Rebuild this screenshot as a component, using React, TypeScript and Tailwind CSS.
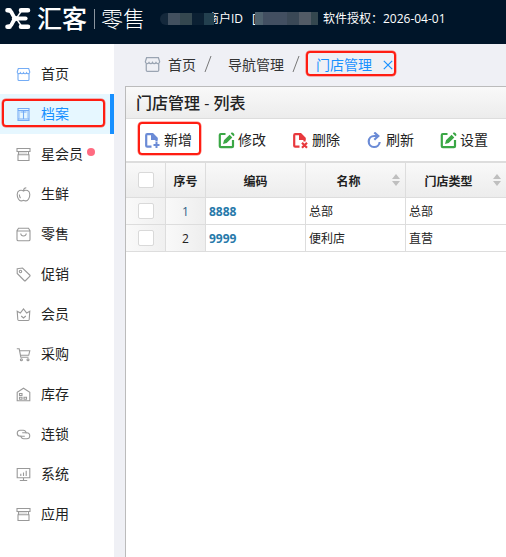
import type { ReactNode } from 'react';

interface MenuItem {
  label: string;
  icon: ReactNode;
  active?: boolean;
  blue?: boolean;
  dot?: boolean;
}

interface Action {
  label: string;
  icon: ReactNode;
  marked?: boolean;
}

interface Store {
  code: string;
  name: string;
  type: string;
}

const shopIcon = (
  <>
    <path d="M2.300 1.500h10.400l1.100 3.500a1.700 1.700 0 0 1-3.200.8 1.700 1.700 0 0 1-3.100 0 1.700 1.700 0 0 1-3.100 0A1.700 1.700 0 0 1 1.200 5z" />
    <path d="M2 7v5.500q0 1 1 1h9q1 0 1-1V7" />
  </>
);

const standIcon = (
  <>
    <path d="M1 1.500h13v3H1zM2.500 4.500v3M12.500 4.500v3M2 7.800h11v5.700H2z" />
    <path d="M3.500 6h8" strokeDasharray="1 1" />
  </>
);

const menuItems: MenuItem[] = [
  { label: '首页', icon: shopIcon, blue: true },
  {
    label: '档案',
    icon: (
      <>
        <path d="M2 1.500h11v12H2zM2 3.500h11M7.500 4v7.500M4.500 5h6M2 12h11" />
        <path d="M3.500 4v7.500M11.500 4v7.500" opacity=".4" />
      </>
    ),
    active: true,
    blue: true,
  },
  { label: '星会员', icon: standIcon, dot: true },
  {
    label: '生鲜',
    icon: (
      <>
        <path d="M7.500 4C5 2.300 1.200 3.500 1.200 7.500c0 3.300 2 6.400 3.800 6.400 1 0 1.500-.5 2.500-.5s1.500.5 2.500.5c1.800 0 3.800-3.100 3.800-6.400 0-4-3.800-5.200-6.300-3.500z" />
        <path d="M7.500 4c0-2 .8-3 2.800-3.200M3.300 7.500c.1 1.600.5 2.600 1.200 3.600" />
      </>
    ),
  },
  {
    label: '零售',
    icon: <path d="M2.500 1.300h10L14 3.600V12.500q0 1.300-1.300 1.300H2.300Q1 13.800 1 12.500V3.600zM1 4h13M4.700 6.500q.3 2.500 2.800 2.500t2.800-2.500" />,
  },
  {
    label: '促销',
    icon: (
      <>
        <path d="M1.200 1.800 6.500 1l7.200 7q.7.700 0 1.400l-4.100 4.100q-.7.700-1.400 0L1.200 6.500z" />
        <circle cx="4.500" cy="4.500" r="1.200" />
      </>
    ),
  },
  {
    label: '会员',
    icon: <path d="m1.200 4.300 3.100 1.800 3.200-4.300 3.200 4.300 3.100-1.800-.6 8.200q-.1 1-1 1H2.800q-.9 0-1-1zM5.200 9l2.300 2 2.300-2" />,
  },
  {
    label: '采购',
    icon: (
      <>
        <path d="M.8 1.800h2.400l1.600 8.400h7.700M3.500 3.800h10.300l-1.100 4.500H4.500" />
        <circle cx="5.400" cy="12.700" r="1" />
        <circle cx="12" cy="12.700" r="1" />
      </>
    ),
  },
  {
    label: '库存',
    icon: <path d="M1.200 13.700V5.200l6.300-4 6.300 4v8.500zM3.500 6.500H6v2H3.500zM3.500 10.300H6v2H3.500zM8 10.300h2.500v2H8z" />,
  },
  {
    label: '连锁',
    icon: (
      <>
        <path d="M8.800 9.300H4.300a3 3 0 0 1 0-6.100h2.900a3 3 0 0 1 2.900 3.200" />
        <path d="M6.200 5.700h4.500a3 3 0 0 1 0 6.100H7.800a3 3 0 0 1-2.900-3.200" />
      </>
    ),
  },
  {
    label: '系统',
    icon: <path d="M1.200 1.500h12.600v9.300H1.200zM7.500 10.800v2.500M3.800 13.500h7.400M4.800 6.800V9M7.500 5.500V9M10.200 3.800V9" />,
  },
  { label: '应用', icon: standIcon },
];

const filePaths = (
  <>
    <path d="M7.500 14.700H3.200q-1 0-1-1V3.200q0-1 1-1h5.300l4 4v3.300" fill="none" stroke="currentColor" strokeWidth="2.200" />
    <path d="M7 2v6h6.500V6L9 1.500z" fill="currentColor" />
  </>
);

const editIcon = (
  <svg width="17" height="17" viewBox="0 0 17 17" className="text-[#3ba745]" fill="none" stroke="currentColor" strokeWidth="2.200">
    <path d="M7.500 2H2.800q-1 0-1 1v11.200q0 1 1 1H14q1 0 1-1V8" />
    <path d="m5 12 1-3.700 5.600-5.600 2.700 2.700L8.700 11zM12.700 1.600l2.700 2.700 1.200-1.300q-.5-2-2.700-2.700z" fill="currentColor" stroke="none" />
  </svg>
);

const actions: Action[] = [
  {
    label: '新增',
    marked: true,
    icon: (
      <svg width="17" height="17" viewBox="0 0 17 17" className="text-[#6b8bd6]">
        {filePaths}
        <path d="M12.500 10v6M9.500 13h6" stroke="currentColor" strokeWidth="2" />
      </svg>
    ),
  },
  { label: '修改', icon: editIcon },
  {
    label: '删除',
    icon: (
      <svg width="17" height="17" viewBox="0 0 17 17" className="text-[#e8383d]">
        {filePaths}
        <path d="m10 10.800 5 5M15 10.800l-5 5" stroke="currentColor" strokeWidth="2.200" />
      </svg>
    ),
  },
  {
    label: '刷新',
    icon: (
      <svg width="17" height="17" viewBox="0 0 17 17" className="text-[#6b8bd6]" fill="none" stroke="currentColor" strokeWidth="2.200">
        <path d="M12 4H8.200a5.500 5.500 0 1 0 5.500 6" />
        <path d="m8.300.5 4 3.500-4 3.800" />
      </svg>
    ),
  },
  { label: '设置', icon: editIcon },
];

const stores: Store[] = [
  { code: '8888', name: '总部', type: '总部' },
  { code: '9999', name: '便利店', type: '直营' },
];

function Checkbox() {
  return <span className="block h-4 w-4 rounded-xs border border-[#d9d9d9] bg-white" />;
}

function SortArrows({ className }: { className: string }) {
  return (
    <svg width="8" height="12" viewBox="0 0 8 12" className={`absolute top-[11px] ${className}`} fill="#bfbfbf">
      <path d="M0 5l4-5 4 5zM0 7l4 5 4-5z" />
    </svg>
  );
}

function Header() {
  return (
    <header className="flex h-11 shrink-0 items-center bg-[#001529] text-white">
      <svg width="27" height="23" viewBox="0 0 27 23" className="ml-[4px] mt-[-7px] shrink-0" fill="none" stroke="white" strokeLinecap="round">
        <path d="M3.500 3.300h2M3.500 19.700h2M17 3.300h7M17 19.700h7" strokeWidth="4.600" />
        <path d="M10 11.500h11.500" strokeWidth="4.200" />
        <path d="M5 3.500c4 0 3 8 8 8M5 19.500c4 0 3-8 8-8" strokeWidth="3.800" />
        <path d="M13 10.500q2-3 4-6M13 12.500q2 3 4 6" strokeWidth="1.500" />
      </svg>
      <span className="ml-[6px] mt-[-8px] w-[51px] text-[25px] leading-6 font-medium">汇客</span>
      <span className="ml-[6px] mt-[-6px] h-5 w-px bg-[#8b959f]" />
      <span className="ml-[6px] mt-[-8px] w-11 text-[22px] leading-6 font-light">零售</span>
      <div className="ml-[15px] mt-[-7px] flex items-center text-[12px] leading-4 whitespace-nowrap">
        <div className="relative z-10 mr-[-7px] flex h-3 w-[54px]">
          <span className="w-2 rounded-l-full bg-[#14283b]" />
          <span className="w-3 bg-[#42505f]" />
          <span className="w-3 bg-[#34474f]" />
          <span className="w-3 bg-[#0b2033]" />
          <span className="w-[10px] bg-[#23404f]" />
        </div>
        <span className="w-[39px]">商户ID</span>
        <span className="ml-[6px]">[</span>
        <div className="ml-[-1px] flex h-[13px] w-[63px]">
          <span className="w-2 bg-[#4f626e]" />
          <span className="w-6 bg-[#424f61]" />
          <span className="w-3 bg-[#3a4856]" />
          <span className="w-3 bg-[#525b66]" />
          <span className="w-[7px] bg-[#34474f]" />
        </div>
        <span className="ml-[5px]">软件授权：2026-04-01</span>
      </div>
    </header>
  );
}

function Sidebar() {
  return (
    <nav className="w-[114px] shrink-0 bg-white pt-[10px]">
      {menuItems.map((item) => (
        <div
          key={item.label}
          className={`relative flex h-10 items-center pl-4 text-[14px] text-[#222] ${
            item.active ? 'border-r-4 border-[#1890ff] bg-[#e6f7ff]' : ''
          }`}
        >
          <svg
            width="15"
            height="15"
            viewBox="0 0 15 15"
            className={`mr-[10px] shrink-0 ${item.blue ? 'text-[#74acf5]' : 'text-[#999]'}`}
            fill="none"
            stroke="currentColor"
            strokeWidth="1.100"
          >
            {item.icon}
          </svg>
          <span className={`mb-[2px] ${item.active ? 'text-[#1890ff]' : ''}`}>{item.label}</span>
          {item.dot && <span className="mb-[5px] ml-1 h-2 w-2 rounded-full bg-[#ff6b81]" />}
          {item.active && <span className="absolute top-[5px] left-[2px] h-7 w-[103px] rounded-[4px] border-2 border-[#ff1d12] ring-[0.5px] ring-[#ff1d12]/60" />}
        </div>
      ))}
    </nav>
  );
}

function Breadcrumb() {
  return (
    <div className="flex h-[42px] items-center pl-[30px] text-[14px] text-[#333]">
      <svg width="17" height="17" viewBox="0 0 15 15" className="mr-[7px] mb-px text-[#9aa4b2]" fill="none" stroke="currentColor" strokeWidth="1.100">
        {shopIcon}
      </svg>
      <span className="mb-[2px]">首页</span>
      <svg width="8" height="16" viewBox="0 0 8 16" className="mx-2 mb-[2px]" stroke="#777">
        <path d="M1 16 7 0" />
      </svg>
      <span className="mb-[2px] ml-2">导航管理</span>
      <svg width="8" height="16" viewBox="0 0 8 16" className="mb-[2px] ml-2" stroke="#777">
        <path d="M1 16 7 0" />
      </svg>
      <div className="mt-[-3px] ml-[6px] flex h-[25px] w-[90px] shrink-0 items-center rounded-[4px] border-2 border-[#ff1d12] pl-2 text-[#1890ff] ring-[0.5px] ring-[#ff1d12]/60">
        <span className="mt-[2px]">门店管理</span>
        <svg width="10" height="10" viewBox="0 0 10 10" className="mt-[3px] ml-[11px] shrink-0" stroke="currentColor" strokeWidth="1.200">
          <path d="m.8.8 8.400 8.400M9.200.8.8 9.200" />
        </svg>
      </div>
    </div>
  );
}

function Toolbar() {
  return (
    <div className="flex h-[44px] shrink-0 items-center border-b-2 border-[#ddd] pl-[18px] text-[14px] text-[#222]">
      {actions.map((action) => (
        <div key={action.label} className="relative flex w-[74px] shrink-0 items-center gap-[3px]">
          {action.icon}
          <span className="mb-px">{action.label}</span>
          {action.marked && <span className="absolute -left-[6px] -top-[7px] h-[33px] w-[63px] rounded-[4px] border-2 border-[#ff1d12] ring-[0.5px] ring-[#ff1d12]/60" />}
        </div>
      ))}
    </div>
  );
}

function StoreTable() {
  const head = 'relative border-r border-b border-[#ddd] px-0 pt-[3px] pb-0 text-center font-bold';
  const cell = 'border-r border-b border-[#ddd] pt-[2px] pr-0 pb-0 pl-[3px]';

  return (
    <table className="w-[400px] table-fixed border-separate border-spacing-0 text-[12px] leading-4 text-[#222]">
      <colgroup>
        <col className="w-10" />
        <col className="w-10" />
        <col className="w-[100px]" />
        <col className="w-[100px]" />
        <col className="w-[120px]" />
      </colgroup>
      <thead>
        <tr className="h-[35px] bg-linear-to-b from-[#f9f9f9] to-[#ececec]">
          <th className="border-r border-b border-[#ddd] p-0">
            <div className="flex justify-center"><Checkbox /></div>
          </th>
          <th className={head}>序号</th>
          <th className={head}>编码</th>
          <th className={head}>
            <span className="mr-[14px]">名称</span>
            <SortArrows className="right-[5px]" />
          </th>
          <th className={head}>
            <span className="mr-[34px]">门店类型</span>
            <SortArrows className="right-[24px]" />
          </th>
        </tr>
      </thead>
      <tbody>
        {stores.map((store, index) => (
          <tr key={store.code} className="h-[27px]">
            <td className="border-r border-b border-[#ddd] bg-linear-to-r from-[#f9f9f9] to-[#f0f0f0] p-0">
              <div className="flex justify-center"><Checkbox /></div>
            </td>
            <td className={`border-r border-b border-[#ddd] bg-linear-to-r from-[#f9f9f9] to-[#eee] px-0 pt-px pb-0 text-center ${index === 0 ? 'text-[#2f5f86]' : ''}`}>
              {index + 1}
            </td>
            <td className={`${cell} font-bold text-[#2779aa]`}>{store.code}</td>
            <td className={cell}>{store.name}</td>
            <td className={cell}>{store.type}</td>
          </tr>
        ))}
      </tbody>
    </table>
  );
}

export default function App() {
  return (
    <div className="flex h-[557px] w-[506px] flex-col overflow-hidden bg-[#eff0f5] font-['Open_Sans','Noto_Sans_CJK_SC',sans-serif]">
      <Header />
      <div className="flex min-h-0 flex-1">
        <Sidebar />
        <main className="flex min-w-0 flex-1 flex-col">
          <Breadcrumb />
          <section className="ml-[11px] min-h-0 flex-1 overflow-hidden border-t border-l border-[#bbb] bg-white">
            <h1 className="flex h-8 items-center border-b border-[#ddd] bg-linear-to-b from-[#f9f9f9] to-[#ececec] pl-[10px] text-[16px] font-medium text-[#222]">
              门店管理 - 列表
            </h1>
            <Toolbar />
            <StoreTable />
          </section>
        </main>
      </div>
    </div>
  );
}
